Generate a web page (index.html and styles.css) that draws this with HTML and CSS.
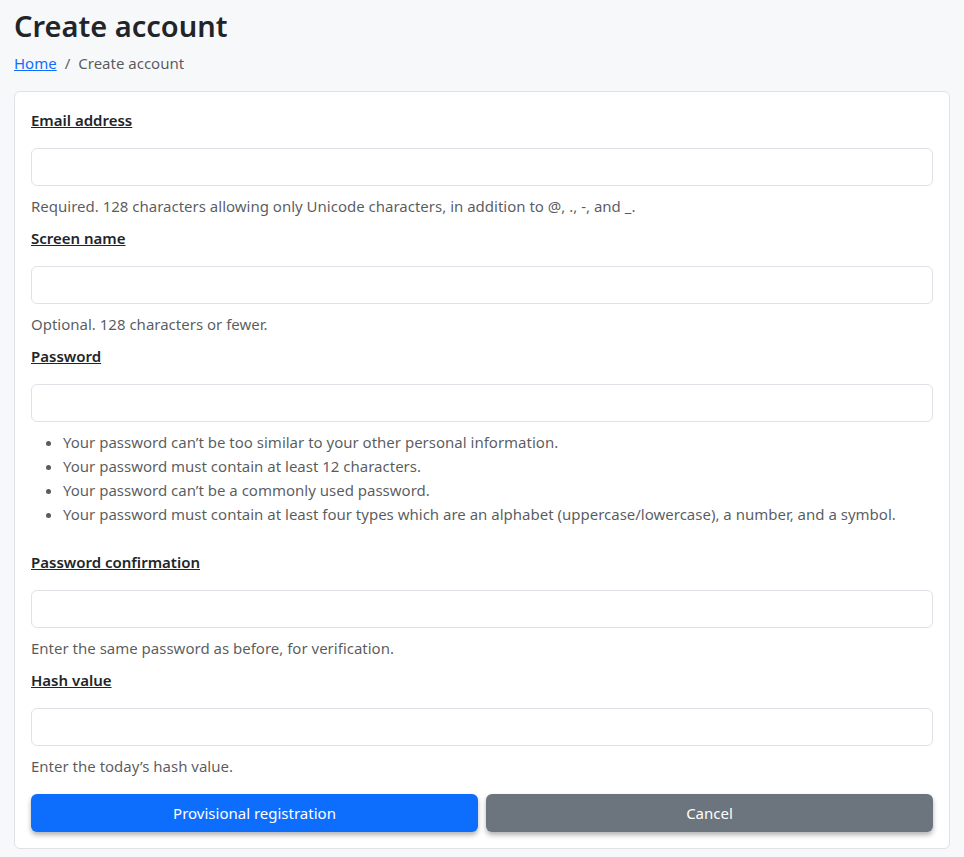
FILE: index.html
```html
<!DOCTYPE html>
<html lang="en">
<head>
<meta charset="utf-8">
<title>Create account</title>
<link rel="stylesheet" href="styles.css">
</head>
<body>
<main class="page">
  <h1 class="title">Create account</h1>
  <nav class="crumbs">
    <a href="#" class="crumb-link">Home</a>
    <span class="crumb-sep">/</span>
    <span class="crumb-active">Create account</span>
  </nav>
  <form class="card">
    <div class="field">
      <label class="label" for="email">Email address</label>
      <input class="input" id="email" type="email">
      <p class="help">Required. 128 characters allowing only Unicode characters, in addition to @, ., -, and _.</p>
    </div>
    <div class="field">
      <label class="label" for="screen">Screen name</label>
      <input class="input" id="screen" type="text">
      <p class="help">Optional. 128 characters or fewer.</p>
    </div>
    <div class="field">
      <label class="label" for="pw">Password</label>
      <input class="input" id="pw" type="password">
      <ul class="rules">
        <li>Your password can’t be too similar to your other personal information.</li>
        <li>Your password must contain at least 12 characters.</li>
        <li>Your password can’t be a commonly used password.</li>
        <li>Your password must contain at least four types which are an alphabet (uppercase/lowercase), a number, and a symbol.</li>
      </ul>
    </div>
    <div class="field">
      <label class="label" for="pw2">Password confirmation</label>
      <input class="input" id="pw2" type="password">
      <p class="help">Enter the same password as before, for verification.</p>
    </div>
    <div class="field">
      <label class="label" for="hash">Hash value</label>
      <input class="input" id="hash" type="text">
      <p class="help">Enter the today’s hash value.</p>
    </div>
    <div class="actions">
      <button type="submit" class="btn btn-primary">Provisional registration</button>
      <button type="button" class="btn btn-secondary">Cancel</button>
    </div>
  </form>
</main>
</body>
</html>
```
FILE: styles.css
```css
* { box-sizing: border-box; }
html, body { margin: 0; padding: 0; }
body {
  background: #f7f8fa;
  color: #212529;
  font-family: "Noto Sans", "Open Sans", sans-serif;
  font-size: 16px;
  line-height: 24px;
}
.page {
  padding: 0 14px 8px 14px;
}
.title {
  margin: 0;
  padding-top: 6px;
  font-size: 29px;
  line-height: 40px;
  font-weight: 600;
}
.crumbs {
  display: flex;
  align-items: center;
  height: 24px;
  margin-top: 5px;
  margin-bottom: 16px;
  font-size: 15px;
  color: rgba(33,37,41,.75);
}
.crumb-link { color: #0d6efd; text-decoration: underline; }
.crumb-sep { padding: 0 8px; }
.card {
  background: #fff;
  border: 1px solid #dee2e6;
  border-radius: 6px;
  padding: 16px;
}
.field { display: block; }
.label {
  display: block;
  font-weight: 600;
  text-decoration: underline;
  margin-bottom: 16px;
  font-size: 15px;
}
.input {
  display: block;
  width: 100%;
  height: 38px;
  border: 1px solid #dee2e6;
  border-radius: 6px;
  background: #fff;
  font: inherit;
}
.help {
  margin: 8px 0;
  font-size: 15px;
  color: rgba(33,37,41,.75);
}
.rules {
  margin: 8px 0 24px;
  padding-left: 32px;
  font-size: 15px;
  color: rgba(33,37,41,.75);
}
.actions {
  display: flex;
  gap: 8px;
  margin-top: 16px;
}
.btn {
  flex: 1;
  height: 38px;
  border: 0;
  border-radius: 6px;
  color: #fff;
  font: inherit;
  font-size: 15px;
  box-shadow: 0 3px 5px rgba(0,0,0,.3);
}
.btn-primary { background: #0d6efd; }
.btn-secondary { background: #6c757d; }
```
